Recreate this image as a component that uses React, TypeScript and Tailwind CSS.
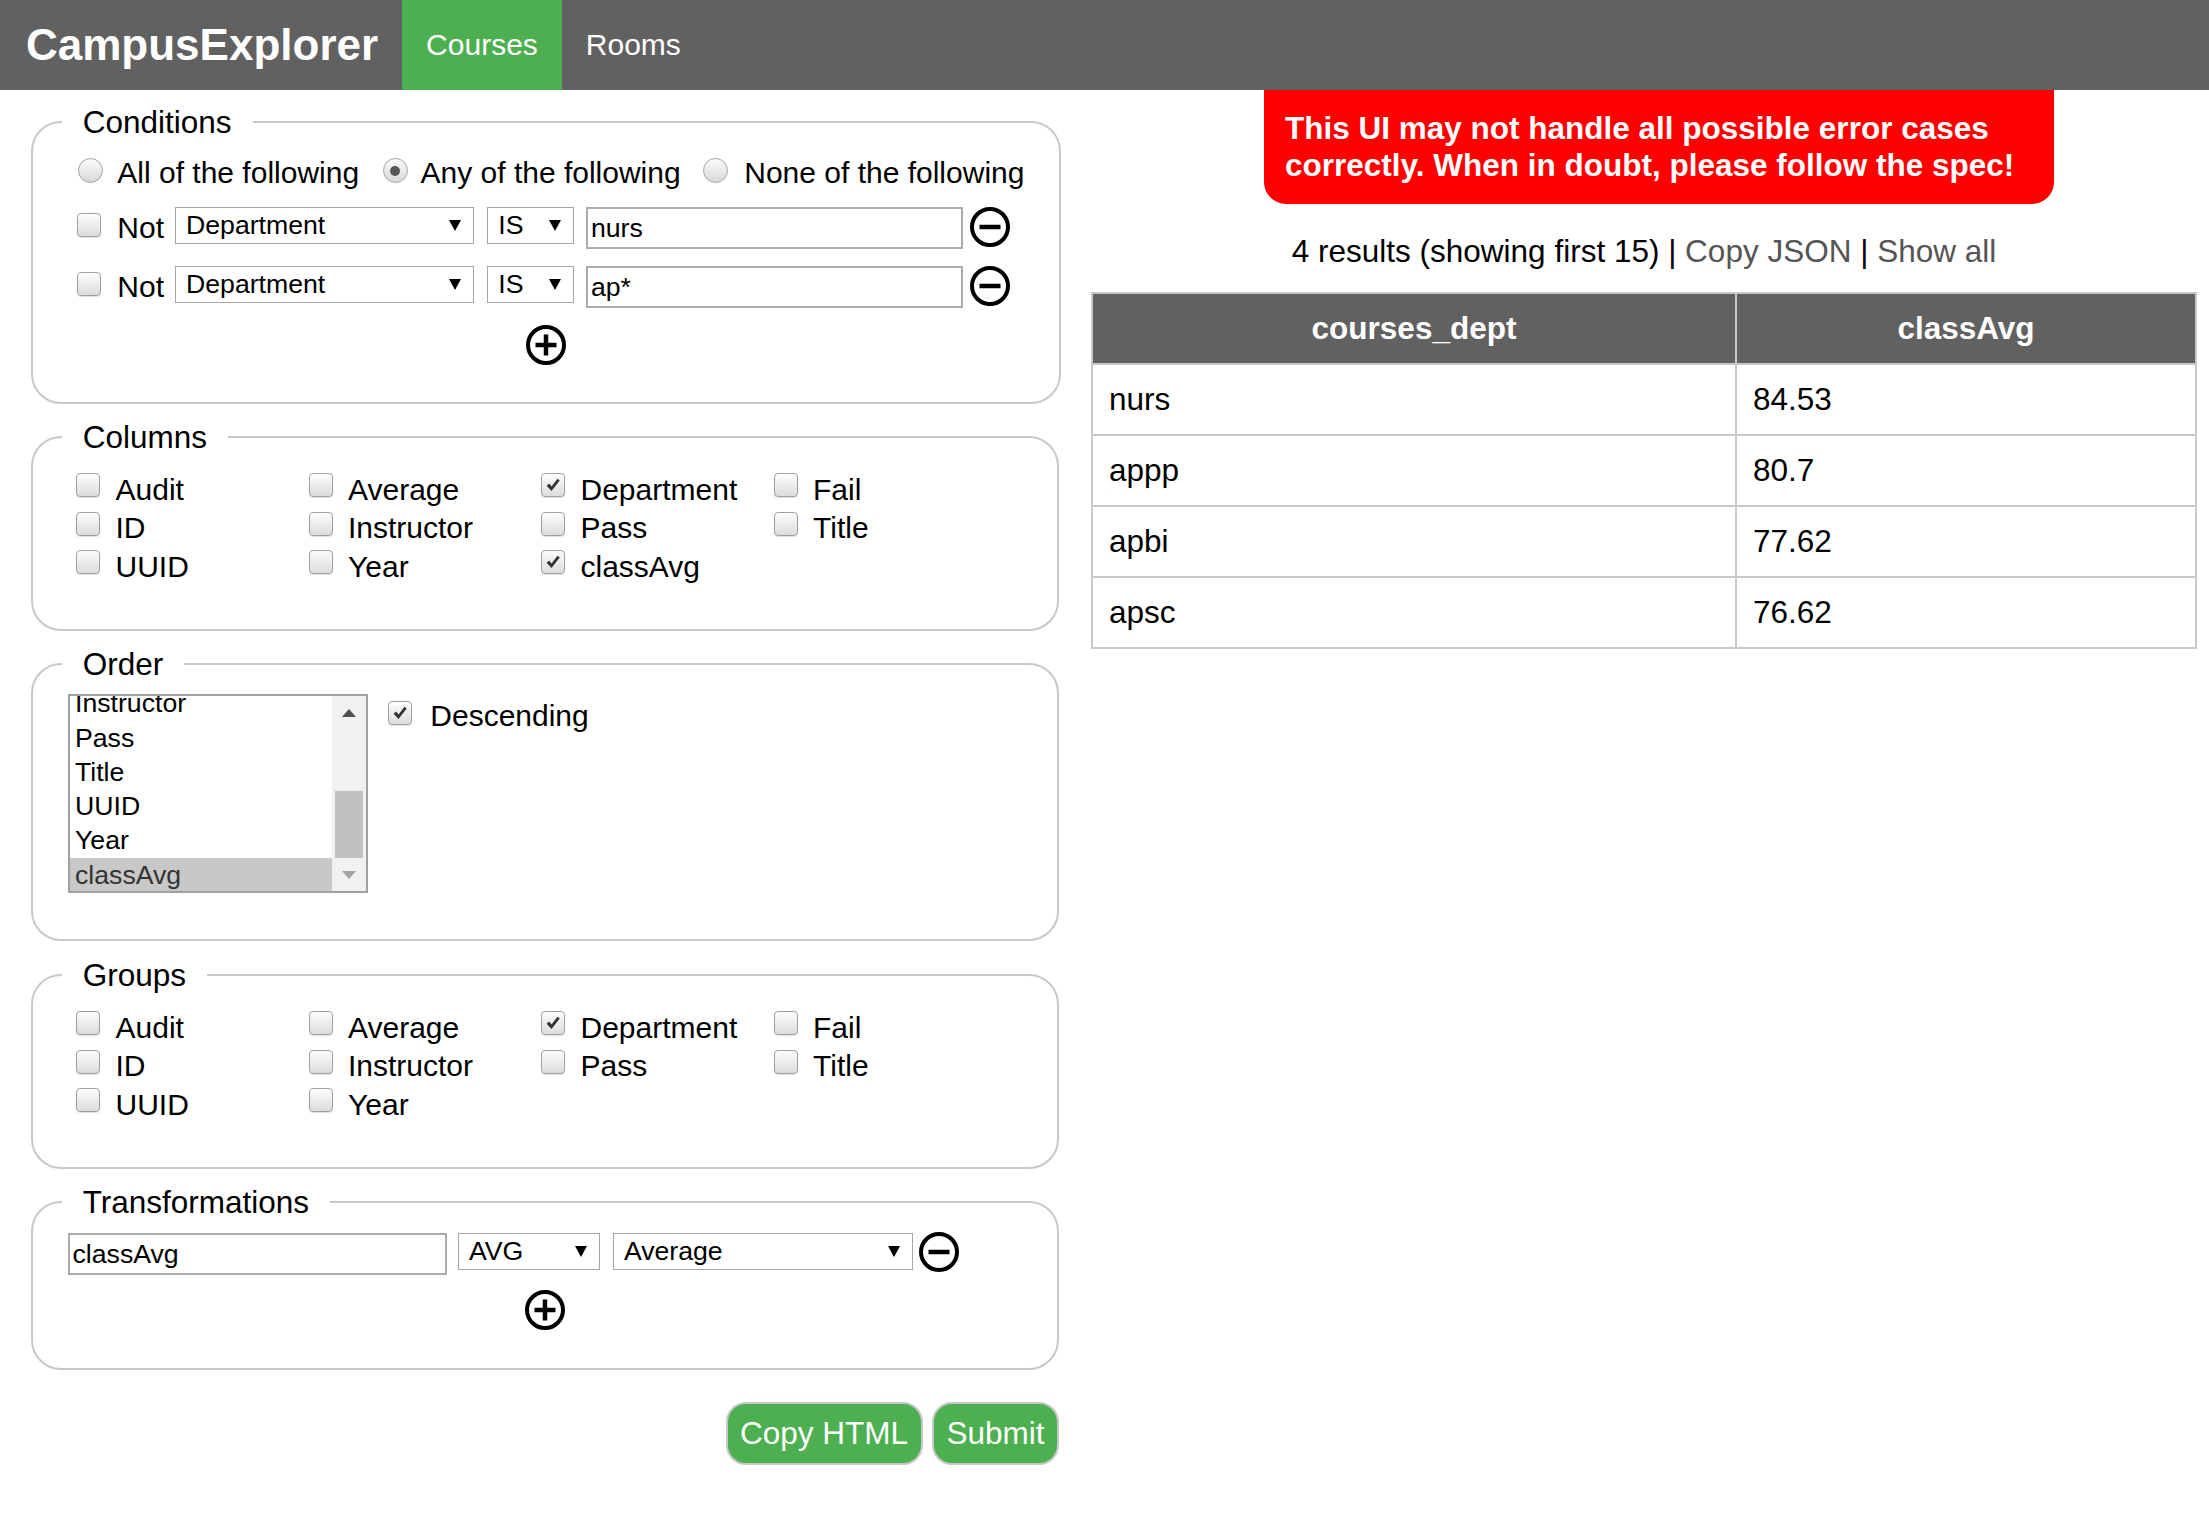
import React from "react";

type CheckItem = [string, boolean];

const columnItems: CheckItem[] = [
  ["Audit", false],
  ["Average", false],
  ["Department", true],
  ["Fail", false],
  ["ID", false],
  ["Instructor", false],
  ["Pass", false],
  ["Title", false],
  ["UUID", false],
  ["Year", false],
  ["classAvg", true],
];

const groupItems: CheckItem[] = [
  ["Audit", false],
  ["Average", false],
  ["Department", true],
  ["Fail", false],
  ["ID", false],
  ["Instructor", false],
  ["Pass", false],
  ["Title", false],
  ["UUID", false],
  ["Year", false],
];

const orderOptions = ["Instructor", "Pass", "Title", "UUID", "Year", "classAvg"];

const results = [
  ["nurs", "84.53"],
  ["appp", "80.7"],
  ["apbi", "77.62"],
  ["apsc", "76.62"],
];

function Arrow() {
  return (
    <svg width="12" height="11" viewBox="0 0 12 11" className="shrink-0">
      <polygon points="0,0 12,0 6,11" fill="#000" />
    </svg>
  );
}

function CircleIcon({ plus, className = "" }: { plus?: boolean; className?: string }) {
  return (
    <svg width="40" height="40" viewBox="0 0 40 40" className={`shrink-0 ${className}`}>
      <circle cx="20" cy="20" r="18" fill="none" stroke="#000" strokeWidth="4" />
      <path d="M9.5 20h21" stroke="#000" strokeWidth="4.5" />
      {plus && <path d="M20 9.5v21" stroke="#000" strokeWidth="4.5" />}
    </svg>
  );
}

function Radio({ checked, className = "" }: { checked?: boolean; className?: string }) {
  return (
    <span
      className={`inline-flex h-[25px] w-[25px] shrink-0 items-center justify-center rounded-full border border-[#a6a6a6] bg-linear-to-b from-[#fbfbfb] to-[#d8d8d8] ${className}`}
    >
      {checked && <span className="h-[10px] w-[10px] rounded-full bg-[#555]" />}
    </span>
  );
}

function Checkbox({ checked, className = "" }: { checked?: boolean; className?: string }) {
  return (
    <span
      className={`inline-flex h-[24px] w-[24px] shrink-0 items-center justify-center rounded-[4px] border border-[#a0a0a0] bg-linear-to-b from-[#fdfdfd] to-[#dcdcdc] shadow-[0_1px_1px_rgba(0,0,0,0.12)] ${className}`}
    >
      {checked && (
        <svg width="18" height="18" viewBox="0 0 24 24">
          <path d="M3.5 13 L7 10 L10 14 L18 3.5 L21 6 L10 20 Z" fill="#333" />
        </svg>
      )}
    </span>
  );
}

function Select({ label, className = "" }: { label: string; className?: string }) {
  return (
    <div
      className={`flex h-[37px] shrink-0 items-center justify-between border border-[#a6a6a6] bg-white pl-[10px] pr-[12px] text-[26.67px] ${className}`}
    >
      <span className="whitespace-nowrap">{label}</span>
      <Arrow />
    </div>
  );
}

function TextBox({ value, className = "" }: { value: string; className?: string }) {
  return (
    <div
      className={`flex h-[42px] shrink-0 items-center whitespace-nowrap border-2 border-[#ababab] bg-white pl-[3px] text-[26.67px] ${className}`}
    >
      {value}
    </div>
  );
}

function Box({
  title,
  className = "",
  children,
}: {
  title: string;
  className?: string;
  children: React.ReactNode;
}) {
  return (
    <fieldset
      className={`rounded-[30px] border-2 border-[#c8c8c8] px-[34.5px] ${className}`}
    >
      <legend className="-ml-[5.8px] px-[21px] text-[31.5px]">{title}</legend>
      {children}
    </fieldset>
  );
}

function CheckGrid({ items, className = "" }: { items: CheckItem[]; className?: string }) {
  return (
    <div className={`grid grid-cols-[repeat(4,232.5px)] ${className}`}>
      {items.map(([label, checked]) => (
        <div key={label} className="flex h-[38.5px] items-start">
          <Checkbox checked={checked} className="ml-[8.5px] mt-[3px]" />
          <span className="ml-[15.5px] mt-[2.5px] whitespace-nowrap text-[30px]">{label}</span>
        </div>
      ))}
    </div>
  );
}

export default function App() {
  return (
    <div className="min-h-screen bg-white font-['Liberation_Sans',Arial,sans-serif] leading-[1.15] text-black">
      {/* Top bar */}
      <div className="flex h-[90px] items-stretch bg-[#616161] text-white">
        <div className="flex items-center pl-[26px] text-[44px] font-bold">CampusExplorer</div>
        <div className="ml-[24px] flex items-center bg-[#4caf50] px-[24px] text-[30px]">Courses</div>
        <div className="flex items-center px-[24px] text-[30px]">Rooms</div>
      </div>

      <div className="flex items-start">
        {/* Query builder */}
        <div className="w-[1059px] shrink-0 pl-[31px]">
          <Box title="Conditions" className="mt-[13.6px] pb-[37px]">
            <div className="mt-[16.3px] flex h-[34.5px] items-start whitespace-nowrap text-[30px]">
              <Radio className="ml-[10.5px] mt-[2px]" />
              <span className="ml-[14.3px] shrink-0">All of the following</span>
              <Radio checked className="ml-[23.4px] mt-[2px]" />
              <span className="ml-[13px] shrink-0">Any of the following</span>
              <Radio className="ml-[21.9px] mt-[2px]" />
              <span className="ml-[16.7px] shrink-0">None of the following</span>
            </div>
            {["nurs", "ap*"].map((v, i) => (
              <div
                key={v}
                className={`flex h-[43px] items-start ${i === 0 ? "mt-[16.4px]" : "mt-[16.3px]"}`}
              >
                <Checkbox className="ml-[9px] mt-[6px]" />
                <span className="ml-[16.8px] mt-[4px] shrink-0 text-[30px]">Not</span>
                <Select label="Department" className="ml-[11px] w-[299.3px]" />
                <Select label="IS" className="ml-[13px] w-[86.4px]" />
                <TextBox value={v} className="ml-[12.3px] w-[377px]" />
                <CircleIcon className="ml-[7px]" />
              </div>
            ))}
            <div className="mt-[15.7px] flex h-[40px] justify-center">
              <CircleIcon plus />
            </div>
          </Box>

          <Box title="Columns" className="mt-[15px] pb-[43.5px]">
            <CheckGrid items={columnItems} className="mt-[14.8px]" />
          </Box>

          <Box title="Order" className="mt-[14.7px] pb-[45.7px]">
            <div className="mt-[12.4px] flex items-start">
              <div className="ml-[0.8px] flex h-[199px] w-[299.4px] shrink-0 border-2 border-[#a0a0a0] bg-white">
                <div className="flex-1 overflow-hidden text-[26.67px] leading-[34.3px]">
                  <div className="-mt-[10px]">
                    {orderOptions.map((o) => (
                      <div
                        key={o}
                        className={`pl-[4.7px] ${o === "classAvg" ? "bg-[#c8c8c8] text-[#333]" : ""}`}
                      >
                        {o}
                      </div>
                    ))}
                  </div>
                </div>
                <div className="flex w-[33.7px] flex-col bg-[#f1f1f1]">
                  <div className="flex h-[34px] items-center justify-center">
                    <svg width="14" height="8" viewBox="0 0 14 8">
                      <polygon points="0,8 7,0 14,8" fill="#505050" />
                    </svg>
                  </div>
                  <div className="flex flex-1 flex-col justify-end px-[2.5px]">
                    <div className="h-[66.7px] bg-[#c1c1c1]" />
                  </div>
                  <div className="flex h-[33.6px] items-center justify-center">
                    <svg width="14" height="8" viewBox="0 0 14 8">
                      <polygon points="0,0 14,0 7,8" fill="#a3a3a3" />
                    </svg>
                  </div>
                </div>
              </div>
              <Checkbox checked className="ml-[20.3px] mt-[6.7px]" />
              <span className="ml-[18.3px] mt-[5px] text-[30px]">Descending</span>
            </div>
          </Box>

          <Box title="Groups" className="mt-[16px] pb-[43.3px]">
            <CheckGrid items={groupItems} className="mt-[15px]" />
          </Box>

          <Box title="Transformations" className="mt-[14.7px] pb-[38px]">
            <div className="mt-[13.1px] flex h-[42px] items-start">
              <TextBox value="classAvg" className="w-[379px]" />
              <Select label="AVG" className="ml-[11.4px] w-[142px]" />
              <Select label="Average" className="ml-[13px] w-[299.7px]" />
              <CircleIcon className="ml-[6.3px] -mt-[1px]" />
            </div>
            <div className="mt-[15px] flex h-[40px] justify-center">
              <CircleIcon plus />
            </div>
          </Box>

          <div className="mt-[31.7px] flex justify-end gap-[9.4px]">
            <button className="flex h-[63px] items-center rounded-[20px] border-2 border-[#c8c8c8] bg-[#4caf50] px-[12.5px] text-[31.5px] text-white">
              Copy HTML
            </button>
            <button className="flex h-[63px] items-center rounded-[20px] border-2 border-[#c8c8c8] bg-[#4caf50] px-[12.5px] text-[31.5px] text-white">
              Submit
            </button>
          </div>
        </div>

        {/* Results */}
        <div className="ml-[32px] w-[1106px] shrink-0">
          <div className="ml-[173px] w-[790px] rounded-b-[22px] bg-[#ff0000] px-[21px] pb-[20.3px] pt-[20.3px] text-[31.5px] font-bold leading-[36.7px] text-white">
            This UI may not handle all possible error cases correctly. When in doubt, please follow the spec!
          </div>
          <p className="mt-[29.3px] text-center text-[31.5px] leading-[36.2px]">
            4 results (showing first 15) | <span className="text-[#555]">Copy JSON</span> |{" "}
            <span className="text-[#555]">Show all</span>
          </p>
          <table className="mt-[22.2px] w-[1106px] border-collapse border-2 border-[#c8c8c8] text-[31.5px]">
            <thead>
              <tr className="h-[71px] bg-[#616161] text-white">
                <th className="w-[644px] border-2 border-[#c8c8c8] text-center font-bold">courses_dept</th>
                <th className="border-2 border-[#c8c8c8] text-center font-bold">classAvg</th>
              </tr>
            </thead>
            <tbody>
              {results.map(([dept, avg]) => (
                <tr key={dept} className="h-[71px]">
                  <td className="border-2 border-[#c8c8c8] pl-[16px]">{dept}</td>
                  <td className="border-2 border-[#c8c8c8] pl-[16px]">{avg}</td>
                </tr>
              ))}
            </tbody>
          </table>
        </div>
      </div>
    </div>
  );
}
